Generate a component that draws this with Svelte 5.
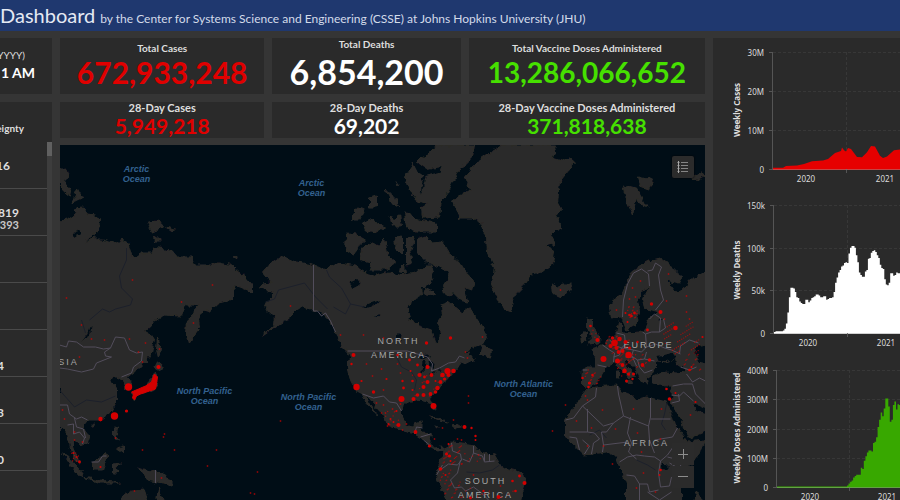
<script>
  const totals = [
    { label: 'Total Cases', value: '672,933,248', kind: 'cases' },
    { label: 'Total Deaths', value: '6,854,200', kind: 'deaths' },
    { label: 'Total Vaccine Doses Administered', value: '13,286,066,652', kind: 'doses' }
  ];
  const recent = [
    { label: '28-Day Cases', value: '5,949,218', kind: 'cases' },
    { label: '28-Day Deaths', value: '69,202', kind: 'deaths' },
    { label: '28-Day Vaccine Doses Administered', value: '371,818,638', kind: 'doses' }
  ];
  const regions = [
    { main: '16', sub: '', low: false },
    { main: '819', sub: ',393', low: false },
    { main: '', sub: '', low: false },
    { main: '', sub: '', low: false },
    { main: '4', sub: '', low: true },
    { main: '3', sub: '', low: true },
    { main: '0', sub: '', low: true },
    { main: '', sub: '', low: false }
  ];

  const weekly = (start, step, values) =>
    values.flatMap((v, i) => [[start + i * step, v], [start + (i + 1) * step, v]]);

  const deaths = [1, 2, 2, 2, 2, 2, 3, 5, 11, 24, 42, 53, 53, 52, 48, 42, 41, 37, 35, 34, 34, 39, 39, 36, 38, 41, 42, 43, 45, 45, 44, 42, 42, 43, 43, 39, 40, 41, 41, 42, 48, 59, 65, 71, 74, 78, 79, 82, 83, 82, 93, 100, 102, 102, 100, 91, 83, 71, 68, 66, 66, 72, 74, 87, 88, 94, 96, 97, 95, 91, 88, 80, 76, 75, 63, 57, 56, 59, 70, 70, 67, 68, 71, 70, 70, 70];
  const doses = [5, 12, 18, 22, 32, 38, 42, 42, 42, 66, 62, 90, 105, 118, 125, 125, 121, 150, 155, 170, 205, 230, 255, 242, 268, 303, 303, 275, 223, 230, 280, 292, 265, 283, 280];

  const charts = [
    {
      title: 'Weekly Cases', color: '#e60000', height: 152, x0: 60, top: 14, base: 131, max: 30, grid: 133,
      ticks: [[30, '30M'], [20, '20M'], [10, '10M'], [0, '0']], years: [93, 172], yearY: 144, titleY: 72,
      points: [[60, 0.3], [70, 0.3], [73, 0.8], [84, 0.9], [91, 1.3], [99, 2], [110, 2.2], [115, 2.6], [122, 4.1], [128, 4.6], [129, 5.5], [131, 4.8], [133, 4.5], [135, 5.4], [138, 5.1], [144, 3.1], [149, 3], [154, 4.3], [158, 5.9], [162, 5.8], [167, 3.4], [170, 2.8], [174, 3.2], [181, 4.8], [187, 5], [400, 5]]
    },
    {
      title: 'Weekly Deaths', color: '#ffffff', height: 165, x0: 61, top: 15, base: 143, max: 150, grid: 134,
      ticks: [[150, '150k'], [100, '100k'], [50, '50k'], [0, '0']], years: [95, 173], yearY: 156, titleY: 80,
      points: weekly(61, 1.49, deaths)
    },
    {
      title: 'Weekly Doses Administered', color: '#38a800', height: 160, x0: 64, top: 15, base: 132, max: 400, grid: 136,
      ticks: [[400, '400M'], [300, '300M'], [200, '200M'], [100, '100M'], [0, '0']], years: [97, 174], yearY: 145, titleY: 73,
      points: [[64, 2], [134, 2], ...weekly(134, 1.53, doses)]
    }
  ];
  const yAt = (c, v) => Math.round((c.base - (v / c.max) * (c.base - c.top)) * 10) / 10;
  const area = (c) => {
    const p = c.points;
    return `M${p[0][0]} ${c.base + 1} ` + p.map(([x, v]) => `L${x.toFixed(1)} ${yAt(c, v)}`).join(' ') + ` L${p[p.length - 1][0].toFixed(1)} ${c.base + 1}Z`;
  };

  const land = [
    // Siberia, East Asia and Indochina
    'M60 221 68 220 75 215 77 208 82 207 88 215 97 216 100 220 99 230 92 236 85 243 95 237 98 240 103 240 117 244 121 240 128 242 132 255 137 258 140 253 153 253 154 247 172 250 178 257 192 257 195 265 213 265 218 263 230 265 238 272 247 278 253 285 253 292 243 288 236 285 233 292 233 300 220 303 210 312 204 310 199 319 200 327 190 343 186 333 187 320 192 316 200 303 195 305 187 305 182 316 163 315 156 320 151 327 145 332 155 338 152 353 144 363 137 370 128 377 132 383 131 388 126 389 124 380 117 377 110 380 117 388 117 402 110 413 100 420 88 420 83 427 91 438 89 443 83 446 77 442 73 438 73 446 80 463 76 460 72 453 68 433 63 427 60 431Z',
    // Arctic islands of Russia
    'M60 170 66 168 69 177 65 181 71 190 70 196 63 190 60 185Z', 'M78 189 83 198 72 203Z', 'M148 222 160 221 164 227 153 232Z', 'M166 227 176 229 172 231Z', 'M155 237 161 241 156 241Z', 'M232 257 239 255 238 258Z',
    // West Pacific islands
    'M158 336 161 350 159 358 157 350Z', 'M158 362 164 367 158 370 155 368Z', 'M155 373 158 377 156 389 140 394 135 400 132 393 147 387Z', 'M114 427 118 428 117 436 121 441 114 437Z', 'M118 448 125 446 125 453Z', 'M92 462 100 458 107 452 108 457 103 470 95 470Z', 'M63 453 70 458 83 472 84 477 75 472Z', 'M84 477 100 480 120 483 100 483Z', 'M113 464 122 463 116 467 119 473 113 473Z', 'M137 467 143 469 157 472 167 475 173 485 163 483 147 480 143 473Z', 'M122 498 133 491 145 490 148 501 122 501Z', 'M157 501 159 488 165 501Z', 'M92 425 95 424 94 427Z',
    // North and Central America
    'M263 272 270 264 282 256 297 262 313 265 327 269 340 263 357 266 367 273 377 276 390 272 400 275 410 273 417 272 427 265 432 265 434 273 430 283 422 287 423 295 412 300 408 310 410 318 420 326 432 330 436 342 440 342 441 332 438 324 443 316 442 305 450 302 463 313 470 308 478 320 487 337 484 344 473 347 463 353 470 352 468 356 476 359 466 364 462 362 457 369 452 375 448 380 443 383 440 388 435 393 431 398 433 403 436 410 432 407 428 401 420 399 413 402 405 402 402 407 402 417 407 426 415 427 417 422 423 421 420 428 423 433 432 434 430 443 435 448 443 447 445 450 437 451 430 447 423 438 412 433 403 431 388 425 385 417 377 407 368 396 366 397 378 416 373 411 364 398 363 394 356 390 351 380 348 370 350 357 348 353 343 348 338 337 335 327 330 320 324 314 318 311 302 308 295 312 290 318 284 322 263 336 275 325 276 316 270 313 265 303 273 299 273 293 260 287 263 283 272 282Z',
    'M483 345 492 350 491 357 480 354Z', 'M430 417 440 418 448 423 440 421Z', 'M452 425 457 424 462 427 455 428Z', 'M436 426 440 427 437 428Z',
    // Canadian archipelago
    'M347 234 357 235 366 240 358 248 353 255 346 250Z', 'M363 248 373 242 379 246 385 238 388 253 395 263 387 270 370 270 372 262 362 260Z', 'M351 220 358 208 365 210 360 220Z', 'M363 223 373 218 378 224 385 227 377 232 366 230Z', 'M370 199 377 197 377 207 370 207Z', 'M387 190 397 200 399 207 391 203Z', 'M390 217 395 219 400 215 402 227 394 227Z', 'M405 212 411 213 417 220 437 223 437 232 417 232 407 228Z', 'M437 145 475 145 473 157 460 170 452 183 447 193 442 200 440 217 423 218 422 208 428 204 417 200 410 190 405 177 413 165 423 157 430 153Z', 'M395 238 403 237 403 253 397 249Z', 'M407 238 415 237 410 250 413 263 407 265Z', 'M418 240 427 237 432 243 443 242 447 250 460 262 467 273 475 282 472 290 465 287 468 302 460 300 453 293 447 297 443 287 450 278 446 270 436 265 427 262 418 253Z', 'M425 287 433 291 437 296 426 295Z', 'M396 182 400 184 398 186Z', 'M401 267 405 265 406 273 400 272Z',
    // Greenland, Iceland, Svalbard
    'M503 145 557 145 553 158 562 161 570 158 576 163 567 173 560 182 558 203 562 210 557 216 563 228 551 234 556 243 547 246 555 252 553 263 540 273 532 275 525 285 515 295 512 312 507 310 498 300 492 283 495 267 488 253 487 237 482 223 473 218 460 218 457 208 453 200 470 190 465 177 480 160 490 153Z', 'M552 285 558 288 562 284 570 284 572 290 562 297 553 293Z', 'M623 185 637 188 641 195 648 207 641 204 637 198 633 214 628 203Z', 'M638 177 654 180 650 190 640 186Z', 'M692 177 701 172 706 176 697 181Z',
    // British Isles
    'M588 318 593 320 593 327 602 340 600 344 588 345 592 337 588 328Z', 'M581 335 587 332 587 340 582 343Z',
    // Scandinavia and Europe
    'M610 307 613 300 623 293 632 272 647 262 660 258 673 267 683 277 680 283 667 280 677 293 687 287 690 280 706 272 716 270 716 342 697 346 694 352 700 362 716 366 716 427 690 438 684 426 672 403 673 386 667 386 653 384 653 376 667 372 687 374 686 369 677 363 676 358 667 362 657 361 657 367 653 373 647 377 648 383 642 382 637 370 627 360 623 362 636 376 631 380 623 370 615 363 607 367 602 373 598 382 588 387 582 383 583 367 597 367 597 357 591 349 603 345 610 340 617 333 619 323 622 325 622 333 643 332 647 327 650 319 660 312 645 308 643 300 650 287 645 289 638 300 640 312 636 325 627 330 622 317 612 318Z',
    'M627 381 632 382 630 385Z', 'M617 371 620 371 620 377 617 377Z',
    // Africa
    'M588 388 617 385 622 392 633 395 637 400 647 397 667 402 677 427 688 442 705 440 700 453 687 470 682 487 682 501 627 501 627 483 620 467 617 457 607 452 585 455 577 447 566 437 566 420 575 407 583 395Z', 'M694 501 698 492 702 501Z',
    // South America
    'M440 463 443 453 452 442 463 443 475 445 480 452 495 455 502 467 520 472 528 478 523 493 520 506 450 506 438 480 436 470Z'
  ];

  const water = [
    'M349 283 356 280 361 281 357 287 353 289Z', 'M362 307 371 303 380 300 374 306 367 308Z', 'M374 316 381 314 378 317Z', 'M399 333 402 336 401 341 398 338Z', 'M418 357 426 353 431 357 424 359Z', 'M423 361 426 361 425 371 422 371Z', 'M429 360 435 364 434 369 430 367Z', 'M429 375 436 372 435 374Z', 'M437 370 442 369 441 371Z', 'M657 356 665 355 672 353 676 358 668 361 659 361Z', 'M662 464 668 464 668 470 663 469Z', 'M695 404 716 413 716 417 697 410Z', 'M660 320 663 319 662 323Z', 'M92 325 91 333 82 342 88 334Z', 'M73 234 80 231 81 234 74 237Z', 'M411 157 420 165 427 170 442 167 440 172 426 176 417 170Z', 'M424 176 426 176 423 190 421 197 422 186Z'
  ];

  const borders = [
    'M60 345 67 347 69 341 77 342 84 347 96 347 104 349 111 348 105 352 106 356 112 357 97 363 94 369 82 372 68 369 60 368', 'M111 348 116 337 125 338 130 350 137 353 143 352 142 361 134 367 132 373 122 377', 'M60 405 68 405 70 414 77 419 82 417 88 420', 'M68 425 74 424 74 434 80 432 85 438 83 444M75 418 77 427 84 429 86 438', 'M92 462 99 462 103 456 107 456M156 470V483',
    'M314 265V311L318 311 322 316 326 313 331 321 336 332', 'M348 351 408 351 418 354 428 357 433 364 432 371 440 368 449 363 456 362 460 356 465 358', 'M363 394 374 398 384 396 390 402 397 403 402 411', 'M415 434 417 427 423 428M421 437 431 434M424 440 430 445',
    'M452 443 453 451 461 454 462 460 458 465 449 464 442 469M461 460 458 473 451 480 455 488 462 487 466 491 474 487 482 493 490 501M463 459 470 462 474 453 483 456 485 462 495 461M443 465 437 475M474 453V446M485 454V461M490 454V461',
    'M623 317 624 300 628 284 634 273 642 269 649 274 650 286M648 271 653 270 656 263 662 267 659 275 661 290 664 300 656 310', 'M583 370 588 370M607 367 598 365M603 345 610 350 615 353 614 362M610 340 617 346 622 348 620 355 614 357M617 333 625 335 626 344 622 348 634 350 642 352 647 347 646 334 652 332 660 332 666 328 664 319M646 334 643 332M647 347 656 344 665 348 672 350 681 354M634 350 632 356 638 360 645 359 647 352M638 360 640 367 645 373 653 370M645 359 655 361M626 357 633 357 637 366M650 319 655 314 661 318 660 332M680 354 681 346 690 340 699 343M681 367 690 370 697 367M687 374 693 382 700 378 706 381M673 386 684 384 693 384 696 394 706 404M672 395 680 396 684 392 694 401M672 403 680 401 679 394',
    'M597 388 596 397 583 406 574 418 566 420M583 406 604 426 614 423 624 416 619 394 618 386M588 409V432H570M624 416 649 426 651 417V398M651 419H671M631 417 628 433 632 443 629 452 637 459M614 423 607 432 602 432 604 445 628 442M570 437 577 438 580 450M588 432 595 433 600 439 594 443 592 454M583 440 590 446 585 454M604 445 603 452M620 462 628 457 637 455 645 456 655 457 661 461 659 473 661 487 670 486 672 477M627 475 635 476 640 484 648 484 650 492 659 490M649 426 650 440 655 453M655 440 673 437 678 428M668 457 680 460 682 470M682 470 670 463M661 461 668 455 675 445 687 447 694 453M640 484V501M648 492 660 500 672 492'
  ];
  const rivers = [
    'M90 320 103 309 110 312 116 309 131 305 133 299 122 288 120 276 127 260 127 248', 'M60 390 75 407 87 400 102 402 116 396', 'M266 302 275 299 279 290 305 283 316 297 328 309', 'M327 270 330 277 342 288 351 304 346 314 334 307M351 304 365 307', 'M397 357 402 367 412 372 417 380 415 390', 'M467 472 480 473 493 470 500 465', 'M667 404 665 414 662 424 666 430', 'M590 435 600 430 607 438', 'M637 460 648 465 656 470M82 320 86 333'
  ];

  // x, y, radius
  const dots = [
    [129, 387, 3.7], [115, 416, 3.7], [101, 419, 2.2], [127, 411, 1.6], [159, 367, 2.1], [80, 462, 1.4], [101, 467, 1], [77, 457, 1], [74, 453, 1],
    [354, 355, 2], [352, 364, 1.2], [357, 387, 3.2], [374, 392, 1.7], [362, 381, 1.1], [387, 379, 1.1], [402, 399, 3], [403, 381, 1.2], [404, 388, 1.4], [413, 381, 1.3], [414, 399, 2], [410, 360, 1.4], [411, 371, 1], [418, 365, 1.4], [420, 375, 2.1], [425, 377, 1.4], [428, 367, 2.1], [432, 375, 1.9], [424, 387, 2], [428, 382, 2], [418, 395, 1.8], [424, 395, 2], [431, 394, 1.9], [436, 392, 1.8], [438, 388, 2.2], [441, 382, 1.9], [443, 375, 2.3], [448, 371, 3.1], [454, 371, 2.3], [449, 375, 2.1], [445, 379, 1.6], [434, 406, 3], [427, 343, 1.7], [451, 338, 1.7], [398, 355, 1.2], [413, 390, 1], [436, 381, 1],
    [399, 425, 2], [416, 432, 1.9], [430, 446, 1.6], [465, 427, 2], [472, 428, 1.2], [476, 436, 1.2], [476, 440, 1], [391, 419, 1], [394, 422, 1], [389, 424, 1], [397, 411, 1], [441, 469, 1.8], [447, 454, 1.6], [450, 456, 1.6], [449, 444, 1], [451, 461, 1], [446, 475, 1], [520, 476, 1.4], [525, 483, 2], [513, 481, 1.3], [516, 491, 1.3], [499, 497, 2], [484, 491, 1.2], [471, 498, 1.4],
    [604, 359, 3], [598, 340, 2.1], [591, 326, 1.3], [620, 339, 2.3], [615, 343, 3.3], [611, 346, 2], [617, 348, 2], [613, 338, 1.7], [626, 342, 2], [619, 352, 1.9], [623, 351, 2], [629, 355, 3.2], [618, 361, 2.5], [623, 365, 1.9], [625, 371, 2.3], [629, 374, 1.6], [634, 374, 1.6], [627, 381, 1.5], [633, 379, 1.2], [630, 348, 1.5], [643, 365, 1.9], [650, 360, 1.7], [638, 342, 1.2], [648, 330, 1.4], [676, 328, 2.3], [661, 312, 2], [652, 304, 1.7], [590, 383, 1.6], [593, 375, 1.3], [583, 378, 1.3], [589, 387, 1.3], [670, 399, 1.8], [667, 389, 1.3], [676, 393, 1], [690, 370, 1.3], [692, 367, 1], [696, 402, 1.1], [703, 337, 1.1], [628, 322, 1], [630, 315, 1.3], [635, 313, 1.4], [632, 316, 1.3], [626, 313, 1], [660, 475, 1], [661, 470, 1.3], [588, 400, 0.8]
  ];
  const specks = [
    [133, 280], [213, 285], [182, 302], [67, 298], [82, 325], [105, 340], [92, 339], [130, 339], [146, 343], [139, 352], [143, 362], [160, 349], [194, 323], [80, 357], [291, 306], [341, 335], [364, 335], [384, 338], [165, 434], [164, 437], [143, 450], [175, 450], [217, 450], [208, 466], [116, 438], [75, 432], [65, 419], [258, 472], [251, 493], [255, 494], [281, 421], [469, 396], [443, 428], [454, 420], [435, 439], [458, 439], [462, 440], [462, 464], [566, 405], [553, 431], [561, 290], [469, 403], [483, 337], [468, 358], [466, 352], [373, 376], [384, 390], [382, 369], [367, 364], [401, 373], [398, 364], [377, 403], [384, 405], [393, 409], [401, 404], [386, 413], [382, 413], [388, 426], [403, 430], [407, 424], [603, 410], [634, 409], [616, 429], [592, 428], [577, 421], [662, 409], [691, 415], [586, 396], [638, 433], [642, 452], [613, 464], [644, 473], [604, 446], [588, 446], [661, 439], [656, 492], [637, 488], [669, 274], [641, 281], [633, 288], [687, 296], [687, 312], [690, 319], [667, 301], [665, 319], [617, 310], [636, 297], [630, 299], [75, 440], [83, 442], [135, 491], [162, 478], [63, 410], [479, 455], [474, 475], [501, 486]
  ];
  // fine scatter inside densely reported areas: x, y, width, height, count
  const areas = [[443, 445, 20, 22, 26], [440, 470, 12, 14, 12], [445, 482, 18, 16, 18], [664, 322, 36, 32, 55], [684, 352, 18, 20, 16], [612, 338, 22, 26, 30], [606, 336, 14, 14, 16], [618, 360, 14, 16, 16], [585, 370, 16, 14, 18], [592, 328, 8, 14, 6], [628, 305, 10, 14, 16], [386, 410, 14, 18, 10], [634, 354, 14, 16, 12], [464, 488, 50, 12, 10], [412, 370, 30, 26, 12], [465, 452, 20, 10, 6], [72, 452, 8, 10, 8]];
  const scatter = areas.flatMap(([x, y, w, h, n], k) =>
    Array.from({ length: n }, (_, i) => [
      Math.round((x + (((i + 1) * 0.618034 + k * 0.37) % 1) * w) * 10) / 10,
      Math.round((y + (((i + 1) * 0.754878 + k * 0.21) % 1) * h) * 10) / 10
    ])
  );

  const oceans = [
    [137, 172, 'Arctic'], [312, 186, 'Arctic'], [205, 394, 'North Pacific'], [309, 400, 'North Pacific'], [524, 387, 'North Atlantic']
  ];
  const continents = [
    [399, 344, 'NORTH'], [399, 358, 'AMERICA'], [649, 348, 'EUROPE'], [647, 446, 'AFRICA'], [486, 484, 'SOUTH'], [486, 498, 'AMERICA'], [69, 365, 'SIA']
  ];
</script>

<div class="app">
  <header>
    <h1>Dashboard</h1>
    <p>by the Center for Systems Science and Engineering (CSSE) at Johns Hopkins University (JHU)</p>
  </header>

  <div class="body">
    <aside>
      <section class="card updated">
        <span>YYYY)</span>
        <strong>1 AM</strong>
      </section>
      <section class="card regions">
        <h2>eignty</h2>
        <div class="scroller">
          <ul>
            {#each regions as r}
              <li class:low={r.low} class:pair={r.sub}>
                <strong>{r.main}</strong>
                {#if r.sub}<span>{r.sub}</span>{/if}
              </li>
            {/each}
          </ul>
          <div class="track"><div class="thumb"></div></div>
        </div>
      </section>
    </aside>

    <main>
      <div class="row totals">
        {#each totals as t}
          <section class="card stat {t.kind}"><h2>{t.label}</h2><strong>{t.value}</strong></section>
        {/each}
      </div>
      <div class="row recent">
        {#each recent as t}
          <section class="card stat {t.kind}"><h2>{t.label}</h2><strong>{t.value}</strong></section>
        {/each}
      </div>
      <div class="map">
        <svg viewBox="60 145 646 355" preserveAspectRatio="xMidYMid slice" role="img" aria-label="World map">
          <defs>
            <filter id="coast" x="0" y="0" width="100%" height="100%">
              <feTurbulence type="fractalNoise" baseFrequency="0.17" numOctaves="2" seed="4" />
              <feDisplacementMap in="SourceGraphic" scale="6" xChannelSelector="R" yChannelSelector="G" />
            </filter>
          </defs>
          <g filter="url(#coast)">
            <rect x="50" y="135" width="666" height="375" fill="#000d18" />
            {#each land as d}<path {d} fill="#2c2b29" stroke="#2c2b29" stroke-width="1" />{/each}
            {#each water as d}<path {d} fill="#000d18" />{/each}
          </g>
          <g fill="none" stroke-linejoin="round">
            {#each rivers as d}<path {d} stroke="#1c202a" />{/each}
            {#each borders as d}<path {d} stroke="#524d5b" />{/each}
          </g>
          <g class="oceans">
            {#each oceans as [x, y, name]}
              <text {x} {y}>{name}</text>
              <text {x} y={y + 10}>Ocean</text>
            {/each}
          </g>
          <g class="continents">
            {#each continents as [x, y, name]}<text {x} {y}>{name}</text>{/each}
          </g>
          <g fill="#d40000">
            <path d="M132 392 139 389 146 386 152 382 154 376 155 374 158 377 157 384 156 389 150 391 141 394 137 396 135 400 133 398 134 394Z" stroke="#d40000" stroke-linejoin="round" />
            {#each dots as [cx, cy, r]}<circle {cx} {cy} {r} />{/each}
            <g opacity="0.65">
              {#each specks as [cx, cy]}<circle {cx} {cy} r="0.9" />{/each}
              {#each scatter as [cx, cy]}<circle {cx} {cy} r="0.7" />{/each}
            </g>
          </g>
        </svg>
        <button class="legend" aria-label="Legend">
          <svg width="12" height="12" viewBox="0 0 12 12" stroke="#858585" stroke-width="1">
            <path d="M0.5 1.5H2.5M0.5 4.5H2.5M0.5 7.5H2.5M0.5 10.5H2.5M1.5 0V12" stroke="#a8a8a8" />
            <path d="M4 1.5H11M4 4.5H11M4 7.5H11M4 10.5H11" />
          </svg>
        </button>
        <div class="zoom">
          <button aria-label="Zoom in">
            <svg width="12" height="12" viewBox="0 0 12 12" stroke="#8c8c8c"><path d="M1 6.5H11M6.5 1V11" /></svg>
          </button>
          <button aria-label="Zoom out">
            <svg width="12" height="12" viewBox="0 0 12 12" stroke="#8c8c8c"><path d="M1 5.5H11" /></svg>
          </button>
        </div>
      </div>
    </main>

    <section class="card charts">
      {#each charts as c}
        <svg width="100%" height={c.height} role="img" aria-label={c.title}>
          <g stroke="#373737" stroke-dasharray="3 2">
            {#each c.ticks as [v]}
              {#if v}<line x1={c.x0} x2="100%" y1={Math.round(yAt(c, v)) + 0.5} y2={Math.round(yAt(c, v)) + 0.5} />{/if}
            {/each}
            <line x1={c.grid + 0.5} x2={c.grid + 0.5} y1={c.top} y2={c.base} />
          </g>
          <path d={area(c)} fill={c.color} />
          <g stroke="#555555">
            <line x1={c.x0 - 0.5} x2={c.x0 - 0.5} y1={c.top} y2={c.base + 1} />
            {#each c.ticks as [v]}
              <line x1={c.x0 - 4} x2={c.x0} y1={Math.round(yAt(c, v)) + 0.5} y2={Math.round(yAt(c, v)) + 0.5} />
            {/each}
            <line x1={c.grid + 0.5} x2={c.grid + 0.5} y1={c.base} y2={c.base + 4} />
          </g>
          <line x1={c.x0} x2="100%" y1={c.base + 0.5} y2={c.base + 0.5} stroke="#999999" stroke-opacity="0.45" />
          <g class="ticks">
            {#each c.ticks as [v, text]}<text x={c.x0 - 9} y={yAt(c, v) + 4} text-anchor="end">{text}</text>{/each}
            {#each c.years as x, i}<text {x} y={c.yearY} text-anchor="middle">{2020 + i}</text>{/each}
          </g>
          <text class="title" transform="translate(27 {c.titleY}) rotate(-90)" text-anchor="middle">{c.title}</text>
        </svg>
      {/each}
    </section>
  </div>
</div>

<style>
  :global(body) { margin: 0; background: #353535; }
  .app { height: 100vh; display: flex; flex-direction: column; overflow: hidden; color: #dedede; font-family: Lato, "Open Sans", sans-serif; }
  h1, h2, p, ul { margin: 0; padding: 0; font-weight: 400; }
  header { display: flex; align-items: baseline; gap: 5px; height: 31px; flex: none; background: #1f386f; white-space: nowrap; line-height: 30px; overflow: hidden; }
  h1 { font-size: 20px; color: #e4e9f3; }
  header p { font-size: 12px; color: #d3dbea; }
  .body { flex: 1; min-height: 0; display: grid; grid-template-columns: 52px minmax(0, 1fr) 187px; column-gap: 8px; padding-top: 7px; }
  .card { background: #2a2a2a; }
  aside { display: flex; flex-direction: column; gap: 8px; min-height: 0; }
  .updated { height: 56px; display: flex; flex-direction: column; align-items: flex-end; justify-content: center; overflow: hidden; white-space: nowrap; box-sizing: border-box; }
  .updated span { font-size: 10px; line-height: 16px; padding-right: 27px; }
  .updated strong { font-size: 14px; line-height: 20px; padding: 0 17px 2px 0; color: #fff; }
  .regions { flex: 1; min-height: 0; display: flex; flex-direction: column; overflow: hidden; }
  .regions h2 { height: 40px; box-sizing: border-box; padding: 19px 28px 0 0; font-size: 10px; line-height: 14px; font-weight: 700; display: flex; justify-content: flex-end; }
  .scroller { flex: 1; display: flex; min-height: 0; }
  ul { flex: 1; list-style: none; min-width: 0; overflow: hidden; }
  li { height: 47px; box-sizing: border-box; border-bottom: 1px solid #4a4a4a; display: flex; flex-direction: column; align-items: flex-end; justify-content: center; padding: 2px 37px 0 0; font-size: 11px; line-height: 12px; }
  li strong { font-size: 12px; }
  li span { font-weight: 700; color: #c8c8c8; }
  li.pair { padding: 14px 28px 0 0; }
  li.low { padding: 25px 43px 0 0; }
  .track { width: 5px; background: #3d3d3d; }
  .thumb { height: 14px; background: #606060; }
  main { display: flex; flex-direction: column; gap: 8px; min-width: 0; min-height: 0; }
  .row { display: grid; grid-template-columns: 205fr 189fr 237fr; gap: 8px; flex: none; }
  .totals { height: 56px; }
  .recent { height: 35px; }
  .stat { display: flex; flex-direction: column; align-items: center; justify-content: center; white-space: nowrap; min-width: 0; }
  .stat h2 { font-size: 10px; line-height: 12px; font-weight: 700; }
  .recent .stat h2 { font-size: 11px; }
  .totals strong { font-size: 30px; line-height: 36px; }
  .totals .deaths strong { font-size: 34px; line-height: 44px; }
  .totals .doses strong { font-size: 28px; }
  .recent strong { font-size: 21px; line-height: 24px; }
  .cases strong { color: #e00000; }
  .deaths strong { color: #fff; }
  .doses strong { color: #46e000; }
  .map { position: relative; flex: 1; min-height: 0; background: #000d18; overflow: hidden; }
  .map > svg { display: block; width: 100%; height: 100%; }
  .oceans { font: italic 700 9px "Liberation Sans", sans-serif; fill: #33618f; text-anchor: middle; }
  .continents { font: 400 9px "Liberation Sans", sans-serif; letter-spacing: 2px; fill: #a6a6a6; text-anchor: middle; }
  button { width: 22px; height: 22px; padding: 0; border: 0; background: #2b2b2b; display: flex; align-items: center; justify-content: center; }
  .legend { position: absolute; top: 11px; right: 11px; border-radius: 2px; box-shadow: 0 0 2px #000; }
  .zoom { position: absolute; right: 11px; bottom: 12px; display: flex; flex-direction: column; gap: 1px; }
  .charts { display: flex; flex-direction: column; min-height: 0; overflow: hidden; }
  .charts svg { flex: none; display: block; overflow: hidden; }
  .ticks { font: 8px "Noto Sans", sans-serif; fill: #dcdcdc; }
  .title { font: 700 8px "Noto Sans", sans-serif; fill: #dedede; }
</style>
